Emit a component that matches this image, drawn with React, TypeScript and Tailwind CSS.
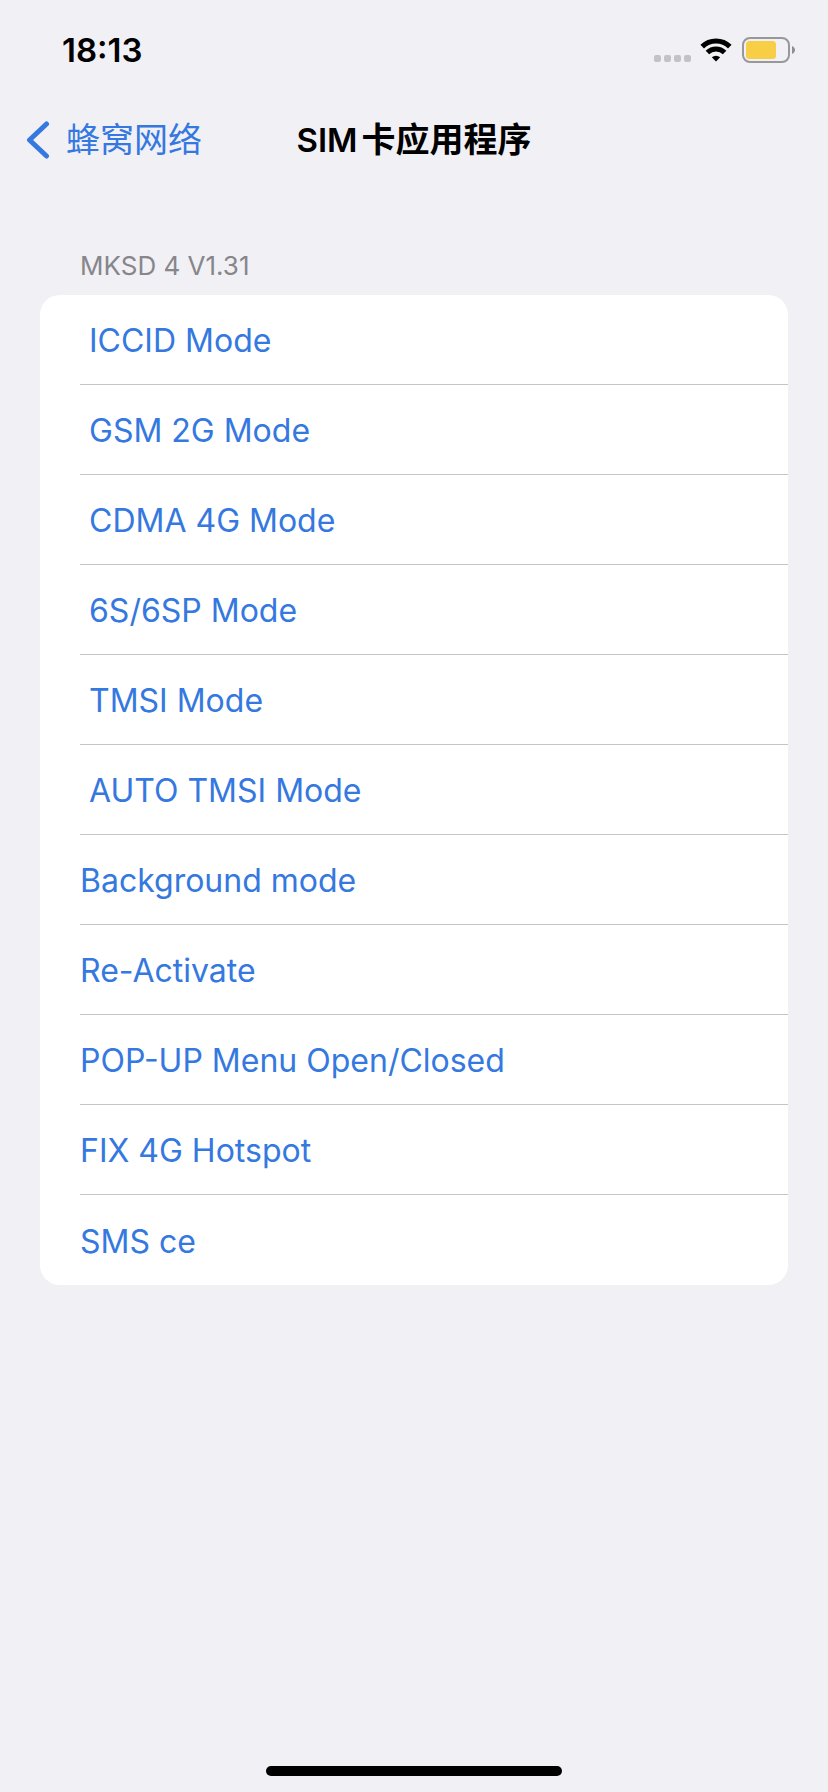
interface MenuItem {
  label: string;
}

// The card's applet reports some titles with a leading space, keep them as is
const items: MenuItem[] = [
  { label: " ICCID Mode" },
  { label: " GSM 2G Mode" },
  { label: " CDMA 4G Mode" },
  { label: " 6S/6SP Mode" },
  { label: " TMSI Mode" },
  { label: " AUTO TMSI Mode" },
  { label: "Background mode" },
  { label: "Re-Activate" },
  { label: "POP-UP Menu Open/Closed" },
  { label: "FIX 4G Hotspot" },
  { label: "SMS ce" },
];

function WifiIcon() {
  return (
    <svg viewBox="0 0 32 24" className="w-8 h-6" aria-hidden="true">
      <g fill="none" stroke="black" strokeWidth="5">
        <path d="M2.2 8.6 A19.6 19.6 0 0 1 29.8 8.6" />
        <path d="M7.4 14.6 A12.2 12.2 0 0 1 24.6 14.6" />
      </g>
      <path d="M11.8 19.2 A6.4 6.4 0 0 1 20.2 19.2 L16 23.6 Z" fill="black" />
    </svg>
  );
}

function BatteryIcon() {
  return (
    <svg viewBox="0 0 54 26" className="w-[54px] h-[26px]" aria-hidden="true">
      <rect x="1" y="1" width="46" height="24" rx="7" fill="none" stroke="#97979c" strokeWidth="2" />
      <rect x="4" y="4" width="30" height="18" rx="3.5" fill="#f7ce46" />
      <path d="M50 9 C54 10.5 54 15.5 50 17 Z" fill="#8e8e93" />
    </svg>
  );
}

function StatusBar() {
  return (
    <div className="flex items-center justify-between h-[100px] pl-[62px] pr-8">
      <time className="text-[33px] leading-10 font-semibold">18:13</time>
      <div className="flex items-center">
        <div className="flex gap-[3px] mt-4 mr-[9px]">
          {Array.from({ length: 4 }).map((_, i) => (
            <span key={i} className="w-[7px] h-[7px] rounded-[2px] bg-[#c3c3c7]" />
          ))}
        </div>
        <WifiIcon />
        <div className="ml-[10px]">
          <BatteryIcon />
        </div>
      </div>
    </div>
  );
}

function NavBar() {
  return (
    <header className="grid grid-cols-[1fr_auto_1fr] items-center h-20 px-[26px]">
      <a href="#cellular" className="flex items-center gap-4 text-[34px] leading-10 text-[#3478e0]">
        <svg viewBox="0 0 24 38" className="w-6 h-[38px]" aria-hidden="true">
          <path d="M20.5 3 L3.5 19 L20.5 35" fill="none" stroke="currentColor" strokeWidth="5" strokeLinecap="round" strokeLinejoin="round" />
        </svg>
        蜂窝网络
      </a>
      <h1 className="flex items-baseline gap-1 text-[33px] leading-10 font-semibold">
        SIM<span className="text-[34px]">卡应用程序</span>
      </h1>
    </header>
  );
}

export default function App() {
  return (
    <div className="min-h-screen flex flex-col bg-[#f1f0f5] text-black font-[Inter,'Noto_Sans_CJK_SC',sans-serif]">
      <StatusBar />
      <NavBar />
      <main className="flex-1 px-10 pt-[70px]">
        <h2 className="px-10 pb-[13px] text-[26px] leading-8 text-[#86868b]">MKSD 4 V1.31</h2>
        <ul className="bg-white rounded-[20px] overflow-hidden">
          {items.map(({ label }) => (
            <li key={label} className="group pl-10">
              <button
                type="button"
                className="block w-full h-[90px] pt-[3px] text-left text-[32px] leading-10 whitespace-pre text-[#3478e0] border-b border-[#c5c5c8] group-last:border-b-0"
              >
                {label}
              </button>
            </li>
          ))}
        </ul>
      </main>
      <div className="self-center w-[296px] h-[10px] mb-4 rounded-full bg-black" />
    </div>
  );
}
